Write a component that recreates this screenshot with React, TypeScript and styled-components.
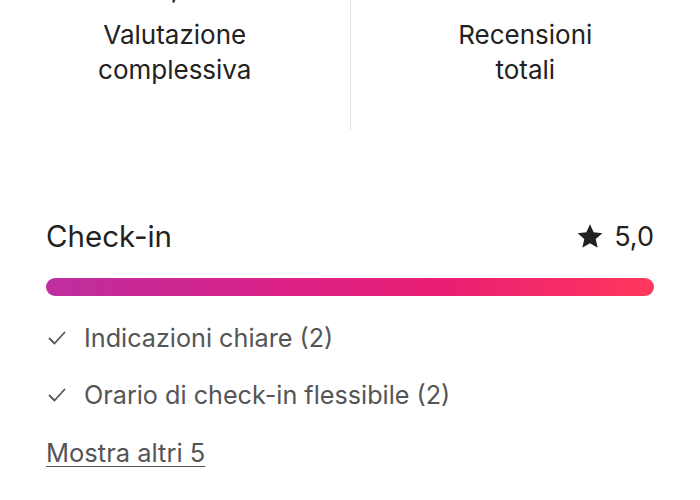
import React from "react";
import styled, { createGlobalStyle } from "styled-components";

const GlobalStyle = createGlobalStyle`
  body {
    margin: 0;
    background: #ffffff;
    font-family: Inter, "Noto Sans", sans-serif;
    color: #222222;
  }
`;

const Page = styled.div`
  width: 700px;
  height: 500px;
  overflow: hidden;
`;

const StatsRow = styled.div`
  display: grid;
  grid-template-columns: 1fr 1px 1fr;
  height: 130px;
`;

const StatCell = styled.div`
  display: flex;
  flex-direction: column;
  align-items: center;
`;

const StatValue = styled.div`
  font-size: 26px;
  line-height: 26px;
  margin-top: -24px;
  font-weight: 500;
`;

const StatLabel = styled.div`
  margin-top: 15px;
  font-size: 26px;
  line-height: 35px;
  text-align: center;
`;

const Divider = styled.div`
  background: #e4e4e4;
`;

const Category = styled.section`
  padding: 86px 46px 0;
`;

const Header = styled.div`
  display: flex;
  justify-content: space-between;
  align-items: center;
  height: 40px;
`;

const Title = styled.h2`
  margin: 0;
  font-size: 29.5px;
  font-weight: 400;
`;

const Score = styled.div`
  display: flex;
  align-items: center;
  gap: 10px;
  font-size: 27px;
`;

const Bar = styled.div`
  margin-top: 22px;
  height: 18px;
  border-radius: 9px;
  background: linear-gradient(90deg, #bd2e9f 0%, #dc2187 40%, #e91e74 65%, #ff385c 100%);
`;

const List = styled.ul`
  list-style: none;
  margin: 24px 0 0;
  padding: 0;
  display: flex;
  flex-direction: column;
  gap: 21px;
`;

const Item = styled.li`
  display: flex;
  align-items: center;
  gap: 18px;
  font-size: 25.2px;
  line-height: 36px;
  color: #555555;
  svg {
    margin-left: 2px;
    flex-shrink: 0;
  }
`;

const MoreLink = styled.a`
  display: inline-block;
  margin-top: 22px;
  font-size: 25.5px;
  line-height: 36px;
  color: #555555;
  text-decoration: underline;
  text-decoration-thickness: 1px;
  text-underline-offset: 4px;
`;

const Star = () => (
  <svg width="28" height="27" viewBox="0 0 32 32" fill="#222222">
    <path d="M16 1.5l4.3 9.6 10.4 1-7.9 7 2.3 10.3L16 24.1l-9.1 5.3 2.3-10.3-7.9-7 10.4-1z" />
  </svg>
);

const Check = () => (
  <svg width="18" height="14" viewBox="0 0 18 14" fill="none" stroke="#555555" strokeWidth="1.8" strokeLinecap="round" strokeLinejoin="round">
    <path d="M1.5 7.5l5 5L16.5 1.5" />
  </svg>
);

const items = ["Indicazioni chiare (2)", "Orario di check-in flessibile (2)"];

export default function App() {
  return (
    <Page>
      <GlobalStyle />
      <StatsRow>
        <StatCell>
          <StatValue>4,9</StatValue>
          <StatLabel>
            Valutazione
            <br />
            complessiva
          </StatLabel>
        </StatCell>
        <Divider />
        <StatCell>
          <StatValue>2</StatValue>
          <StatLabel>
            Recensioni
            <br />
            totali
          </StatLabel>
        </StatCell>
      </StatsRow>
      <Category>
        <Header>
          <Title>Check-in</Title>
          <Score>
            <Star />
            5,0
          </Score>
        </Header>
        <Bar />
        <List>
          {items.map((t) => (
            <Item key={t}>
              <Check />
              {t}
            </Item>
          ))}
        </List>
        <MoreLink href="#">Mostra altri 5</MoreLink>
      </Category>
    </Page>
  );
}
